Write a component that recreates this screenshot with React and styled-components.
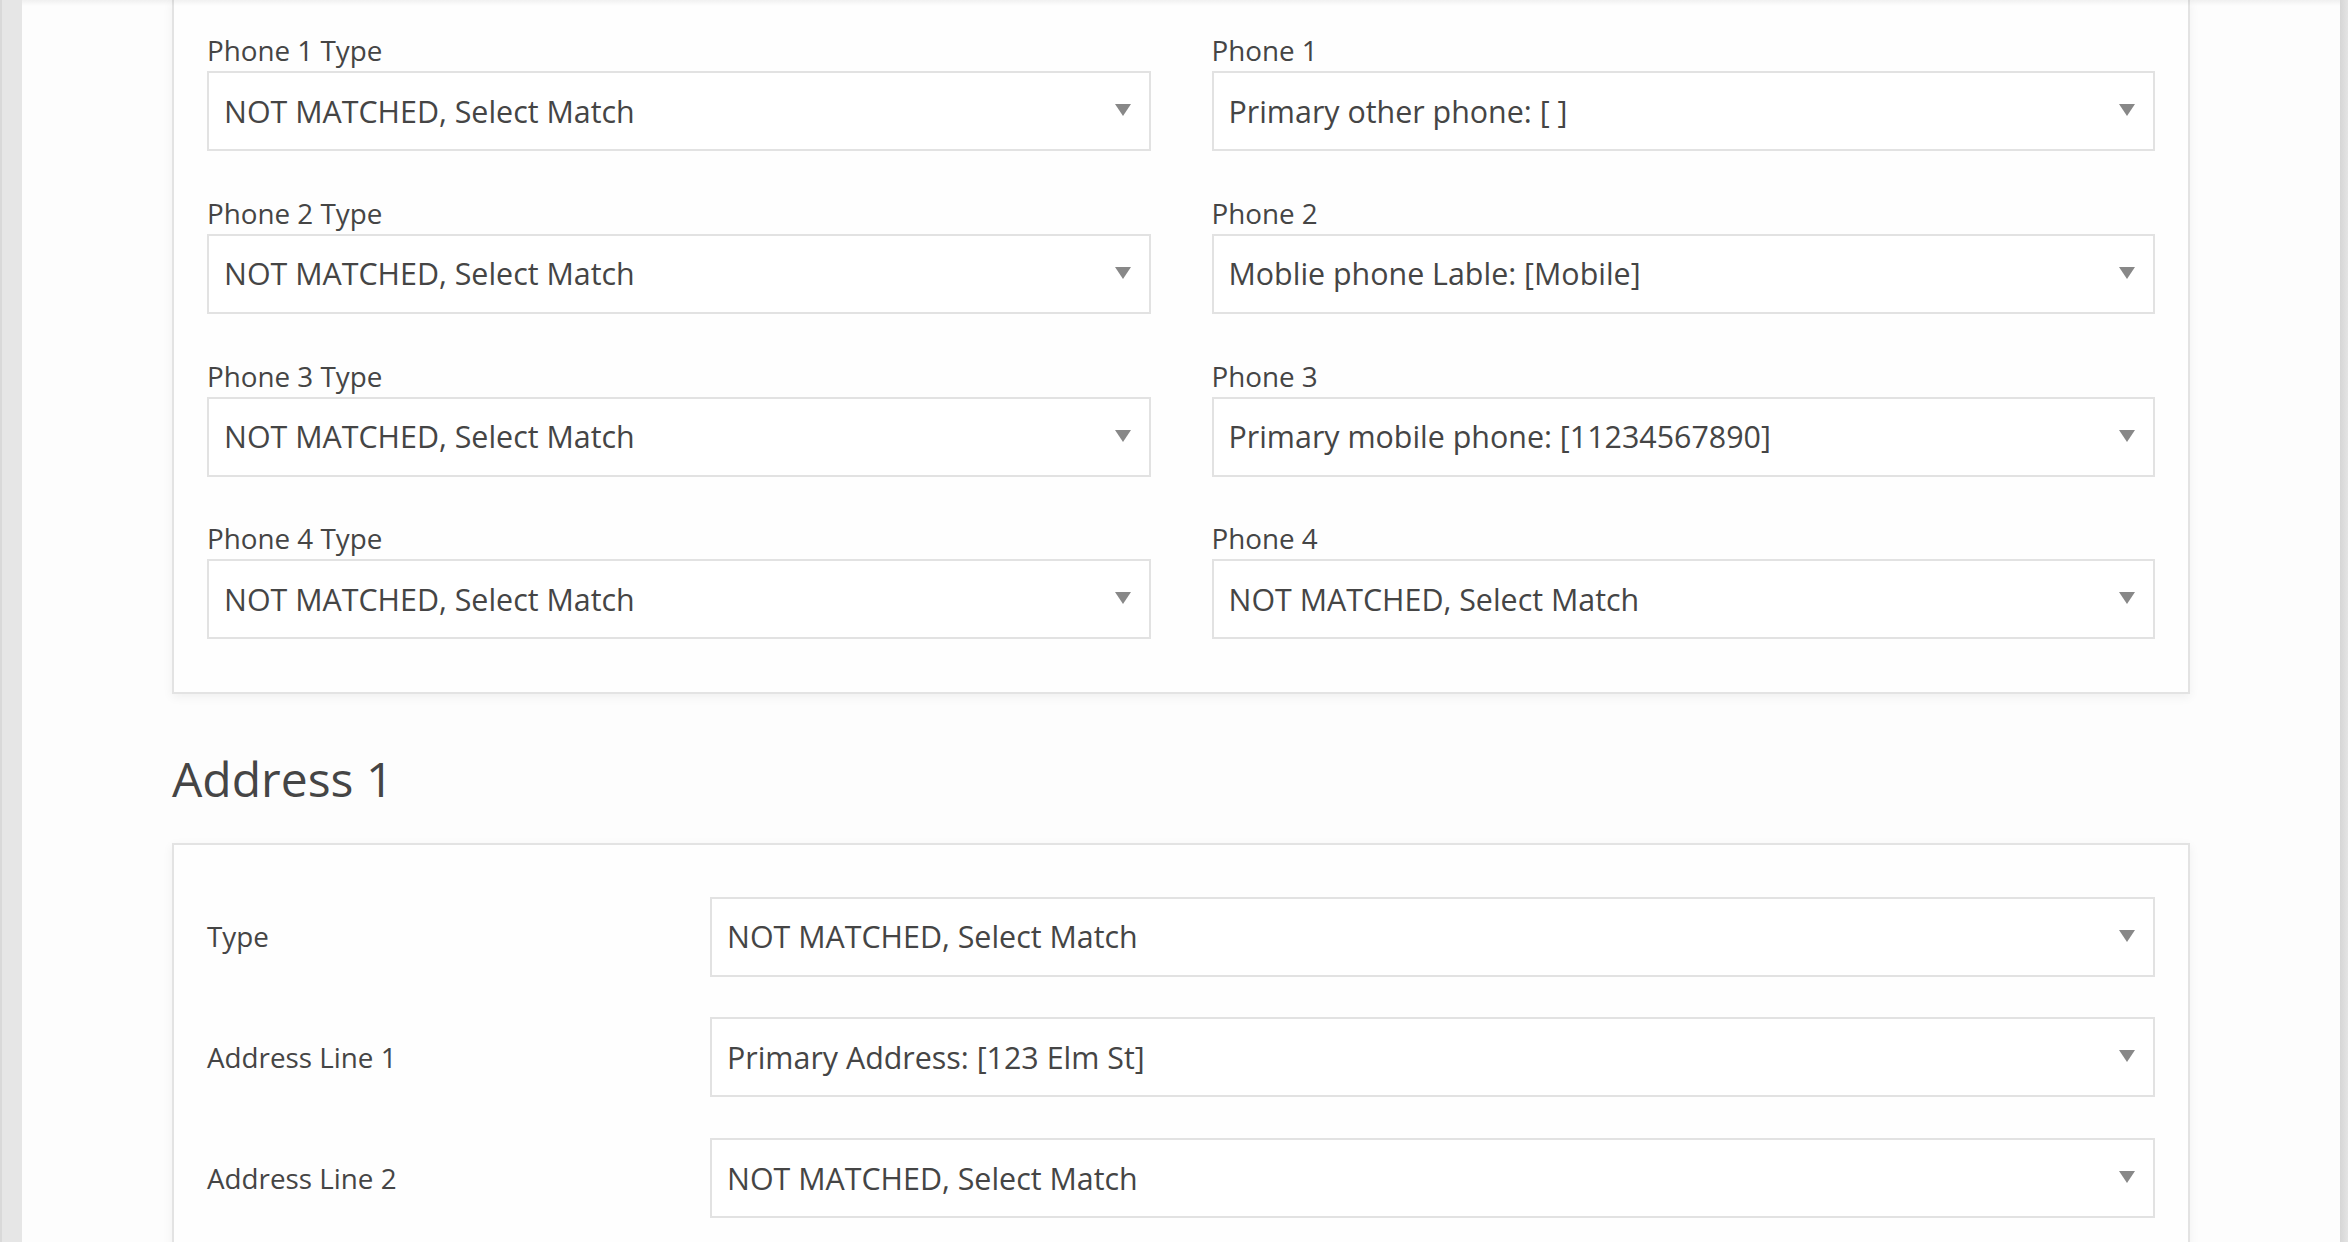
import React from 'react';
import styled, { createGlobalStyle } from 'styled-components';

const GlobalStyle = createGlobalStyle`
    html, body {
        margin: 0;
        height: 100%;
        overflow: hidden;
    }
    body {
        font-family: "Open Sans", "Noto Sans", sans-serif;
        color: #454545;
    }
`;

const Shell = styled.div`
    display: flex;
    height: 100vh;
`;

const EdgeLeft = styled.div`
    width: 20px;
    flex: none;
    background: #e6e6e6;
    border-left: 2px solid #d9d9d9;
`;

const EdgeRight = styled.div`
    width: 8px;
    flex: none;
    background: linear-gradient(to right, #d6d6d6, #e4e4e4);
`;

const Main = styled.main`
    flex: 1;
    position: relative;
    background: #fdfdfd;
    overflow: hidden;

    &::after {
        content: '';
        position: absolute;
        top: 0;
        left: 0;
        right: 0;
        height: 6px;
        background: linear-gradient(to bottom, rgba(0, 0, 0, 0.05), rgba(0, 0, 0, 0));
        pointer-events: none;
    }
`;

const Container = styled.div`
    width: 2018px;
    margin: 0 auto;
`;

const Card = styled.section`
    box-sizing: border-box;
    background: #fefefe;
    border: 2px solid #e3e3e3;
    border-top: ${p => (p.$open ? 'none' : '2px solid #e3e3e3')};
    padding: ${p => p.$pad};
    box-shadow: 0 3px 10px rgba(0, 0, 0, 0.06);
`;

const PhoneGrid = styled.div`
    display: grid;
    grid-template-columns: 1fr 1fr;
    column-gap: 61px;
    row-gap: 41.8px;
`;

const Field = styled.div`
    display: flex;
    flex-direction: column;
`;

const Label = styled.label`
    font-size: 27.8px;
    line-height: 41px;
    color: #454545;
`;

const Select = styled.div`
    box-sizing: border-box;
    height: 80px;
    display: flex;
    align-items: center;
    justify-content: space-between;
    padding: 0 18px 0 15px;
    background: #fff;
    border: 2px solid #e2e2e2;
    font-size: 30.4px;
    color: #454545;
    white-space: nowrap;
`;

const Arrow = styled.svg`
    width: 16px;
    height: 12px;
    flex: none;
    margin-top: -2px;
`;

const SectionTitle = styled.h2`
    margin: 59.6px 0 36.6px;
    font-size: 48px;
    font-weight: 400;
    line-height: 52.8px;
    color: #454545;
`;

const AddressGrid = styled.div`
    display: grid;
    grid-template-columns: 503px 1fr;
    row-gap: 40.8px;
    align-items: center;
`;

function Dropdown({ value }) {
    return (
        <Select>
            <span>{value}</span>
            <Arrow viewBox="0 0 16 12">
                <polygon points="0,0 16,0 8,12" fill="#888" />
            </Arrow>
        </Select>
    );
}

const NM = 'NOT MATCHED, Select Match';

const phones = [
    ['Phone 1 Type', NM, 'Phone 1', 'Primary other phone: [ ]'],
    ['Phone 2 Type', NM, 'Phone 2', 'Moblie phone Lable: [Mobile]'],
    ['Phone 3 Type', NM, 'Phone 3', 'Primary mobile phone: [11234567890]'],
    ['Phone 4 Type', NM, 'Phone 4', NM],
];

const address = [
    ['Type', NM],
    ['Address Line 1', 'Primary Address: [123 Elm St]'],
    ['Address Line 2', NM],
];

export default function App() {
    return (
        <Shell>
            <GlobalStyle />
            <EdgeLeft />
            <Main>
                <Container>
                    <Card $open $pad="30px 33px 52.3px">
                        <PhoneGrid>
                            {phones.map(([l1, v1, l2, v2]) => (
                                <React.Fragment key={l1}>
                                    <Field>
                                        <Label>{l1}</Label>
                                        <Dropdown value={v1} />
                                    </Field>
                                    <Field>
                                        <Label>{l2}</Label>
                                        <Dropdown value={v2} />
                                    </Field>
                                </React.Fragment>
                            ))}
                        </PhoneGrid>
                    </Card>
                    <SectionTitle>Address 1</SectionTitle>
                    <Card $pad="52px 33px 52px">
                        <AddressGrid>
                            {address.map(([label, value]) => (
                                <React.Fragment key={label}>
                                    <Label>{label}</Label>
                                    <Dropdown value={value} />
                                </React.Fragment>
                            ))}
                        </AddressGrid>
                    </Card>
                </Container>
            </Main>
            <EdgeRight />
        </Shell>
    );
}
